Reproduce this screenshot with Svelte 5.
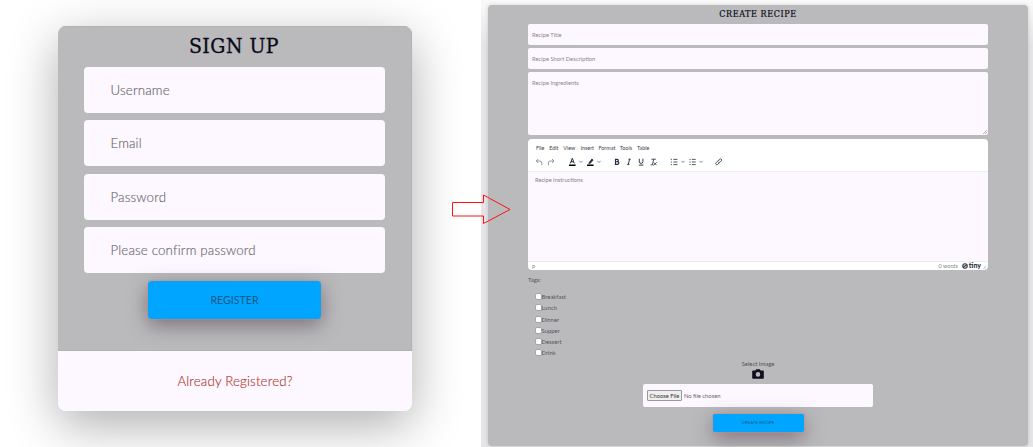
<script>
  const accountFields = ['Username', 'Email', 'Password', 'Please confirm password'];
  const menus = [['File', 13.3], ['Edit', 14], ['View', 17.2], ['Insert', 18], ['Format', 21.3], ['Tools', 17.2], ['Table', 15]];
  const tags = ['Breakfast', 'Lunch', 'Dinner', 'Supper', 'Dessert', 'Drink'];
</script>

<main>
  <section class="left">
    <div class="signup">
      <div class="signup-body">
        <h1>SIGN UP</h1>
        {#each accountFields as field}
          <div class="field">{field}</div>
        {/each}
        <div class="button register">REGISTER</div>
      </div>
      <div class="signup-foot">Already Registered?</div>
    </div>
  </section>

  <section class="right">
    <div class="recipe">
      <h2>CREATE RECIPE</h2>
      <div class="input">Recipe Title</div>
      <div class="input">Recipe Short Description</div>
      <div class="input area">Recipe Ingredients
        <svg class="grip" viewBox="0 0 4 4"><path d="M0 4 4 0M2 4 4 2" /></svg>
      </div>
      <div class="editor">
        <div class="menubar">
          {#each menus as [label, width]}
            <span style="width:{width}px">{label}</span>
          {/each}
        </div>
        <svg class="toolbar" viewBox="0 0 460 17" fill="none" stroke="#222f3e" stroke-width=".8">
          <g stroke="#7a828b">
            <path d="M10.2 5 8.2 7l2 2M8.4 7h3.3q2.1 0 2.1 2v2.3" />
            <path d="m24 5 2 2-2 2M25.8 7h-3.3q-2.1 0-2.1 2v2.3" />
          </g>
          <g transform="translate(0 .8)">
            <path d="m42.3 8.6 2-5.1 2 5.1M43 7h2.6" stroke-width="1" />
            <path d="M41 10.5h6.6" stroke="#000" stroke-width="1.4" />
            <path d="M59 10.5h6.6" stroke="#000" stroke-width="1.4" />
            <path d="m61.2 7.8 2.7-3.6 1.2 1-2.7 3.2-1.6.4z" fill="#222f3e" />
          </g>
          <g stroke="#5f6973" stroke-width=".8" transform="translate(0 .8)">
            <path d="m51.3 6.1 1.6 1.6 1.6-1.6M69.4 6.1 71 7.7l1.6-1.6M153.4 6.1l1.6 1.6 1.6-1.6M171.5 6.1l1.6 1.6 1.6-1.6" />
          </g>
          <g transform="translate(0 .8)">
            <path d="M87.5 4.5v5h1.8q1.5 0 1.5-1.35T89.3 6.9H87.5h1.5q1.3 0 1.3-1.2T89 4.5z" stroke-width="1.15" />
            <path d="M100.5 4.4h2.2M99.2 9.6h2.2M101.6 4.4l-1.3 5.2" stroke-width=".95" />
            <path d="M111.3 4v2.8q0 1.8 1.8 1.8t1.8-1.8V4M110.9 10.3h4.5" stroke-width=".95" />
            <path d="M123.3 4.4h4.6M125.8 4.4l-1.5 5.3M122.7 10h2.8M125.6 7.5l3 3M128.6 7.5l-3 3" />
            <path d="M145.4 4.6h4M145.4 7.2h4M145.4 9.8h4M163.9 4.6h3.8M163.9 7.2h3.8M163.9 9.8h3.8" />
            <path d="M143.3 4v1.3M142.8 7.2h1.2M142.8 9.8h1.2" />
            <path d="M161.4 4.6h1.2M161.4 7.2h1.2M161.4 9.8h1.2" />
            <path d="m190.2 5.9 1.4-1.5q1.1-.8 1.8.1.7.8 0 1.5l-1.8 1.8q-.8.6-1.5.1M191.2 8.1l-1.4 1.5q-1.1.8-1.8-.1-.7-.8 0-1.5l1.8-1.8q.8-.6 1.5-.1" />
          </g>
        </svg>
        <div class="content">Recipe Instructions</div>
        <div class="status">
          <span class="path">p</span>
          <span class="words">0 words</span>
          <svg class="mark" viewBox="0 0 6 6"><circle cx="3" cy="3" r="2.2" /><path d="m1.5 4 3-2" /></svg>
          <b>tiny</b>
          <svg class="grip" viewBox="0 0 4 4"><path d="M0 4 4 0M2 4 4 2" /></svg>
        </div>
      </div>
      <div class="tags-label">Tags:</div>
      <div class="tags">
        {#each tags as tag}
          <div class="tag"><i></i><span>{tag}</span></div>
        {/each}
      </div>
      <div class="select">Select Image</div>
      <svg class="camera" viewBox="0 0 12 10">
        <path fill="#10101d" fill-rule="evenodd" d="M1 1.5h2.4L4.2.3h3.6l.8 1.2H11q.8 0 .8.8v6.6q0 .8-.8.8H1q-.8 0-.8-.8V2.3q0-.8.8-.8M6 3.1a2.3 2.3 0 1 0 0 4.6 2.3 2.3 0 0 0 0-4.6" />
      </svg>
      <div class="file"><span class="choose">Choose File</span><span>No file chosen</span></div>
      <div class="button create">CREATE RECIPE</div>
    </div>
  </section>

  <svg class="arrow" viewBox="0 0 60 32"><path d="M1.5 8.5h31V1L59 15.5 32.5 29.5V22h-31z" /></svg>
</main>

<style>
  :global(body) { background: #fff; }
  main { position: relative; display: flex; width: 1033px; height: 447px; overflow: hidden; font-family: Lato, sans-serif; box-sizing: border-box; }
  main :global(*) { box-sizing: border-box; }
  h1, h2 { margin: 0; font-family: "DejaVu Serif Condensed", "DejaVu Serif", serif; font-stretch: condensed; font-weight: 400; color: #090917; text-align: center; white-space: nowrap; }
  .left { width: 481px; height: 447px; padding: 26px 0 0 58px; overflow: hidden; flex: none; }
  .signup { width: 354px; height: 385px; border-radius: 8px; box-shadow: 0 14px 50px rgba(0, 0, 8, .32); overflow: hidden; }
  .signup-body { height: 325px; padding: 0 27px 0 26px; background: #bababc; border: solid #b2b2b5; border-width: 1px 1px 1px 0; display: flex; flex-direction: column; align-items: center; }
  h1 { height: 40px; line-height: 38px; font-size: 21px; letter-spacing: .5px; -webkit-text-stroke: .3px #090917; }
  .field { width: 301px; height: 46px; margin-bottom: 7.4px; padding-left: 27px; border-radius: 4px; background: #fdf8ff; color: #69676c; font-size: 13.3px; font-weight: 300; line-height: 47px; letter-spacing: .16px; -webkit-text-stroke: .15px #69676c; flex: none; }
  .button { background: #00a5ff; color: #145a83; text-align: center; box-shadow: 0 0 1px 1px rgba(211, 139, 112, .45), 0 6px 20px rgba(57, 37, 57, .5); flex: none; }
  .register { width: 173px; height: 38px; margin-left: 1px; border-radius: 4px; font-size: 10.6px; line-height: 38px; }
  .signup-foot { height: 60px; background: #fdf8ff; color: #b53329; text-align: center; font-size: 13.3px; font-weight: 300; letter-spacing: .15px; line-height: 60px; -webkit-text-stroke: .15px #b53329; }
  .right { width: 552px; height: 447px; padding: 5px 0 0 7px; background: linear-gradient(#fafafa, #e5e5e7 45px); overflow: hidden; }
  .recipe { width: 540px; height: 441px; padding: 0 40px; border-radius: 4px; background: #bababc; box-shadow: 0 0 4px rgba(0, 0, 0, .15); display: flex; flex-direction: column; align-items: center; }
  h2 { height: 19px; font-size: 9px; line-height: 19px; letter-spacing: .55px; -webkit-text-stroke: .2px #090917; }
  .input { position: relative; width: 460px; height: 20.5px; margin-bottom: 3.5px; padding-left: 4px; border-radius: 2px; background: #fdf8ff; color: #8a878d; font-size: 5.8px; line-height: 21px; flex: none; }
  .area { height: 62.5px; margin-bottom: 4.5px; }
  .grip { width: 4px; height: 4px; fill: none; stroke: #888; stroke-width: .6; }
  .area .grip { position: absolute; right: 1px; bottom: 1px; }
  .editor { width: 460px; height: 131px; border-radius: 4px; background: #fff; overflow: hidden; flex: none; }
  .menubar { display: flex; height: 15px; padding: 2px 0 0 8px; align-items: center; font-size: 5.4px; color: #3c4550; }
  .menubar span { flex: none; }
  .toolbar { display: block; width: 460px; height: 17px; }
  .content { height: 91px; padding: 4px 7px; background: #fdf8ff; font-size: 5.7px; line-height: 7px; color: #82808b; border: solid #eee; border-width: 1px 0; }
  .status { height: 8px; display: flex; align-items: center; padding: 0 2px 0 4px; font-size: 5.5px; color: #85858b; }
  .words { margin-left: auto; margin-right: 4px; }
  .mark { width: 6px; height: 6px; fill: none; stroke: #222f3e; stroke-width: 1.1; }
  .status b { margin: 0 2px 1px 1px; font: 900 7px/7px Lato, sans-serif; color: #222f3e; }
  .status .grip { width: 3px; height: 3px; margin-top: 3px; }
  .tags-label { width: 460px; height: 21px; padding-top: 6px; font-size: 5.9px; line-height: 7px; color: #55555b; }
  .tags { width: 445px; height: 68px; }
  .tag { display: flex; height: 11.25px; align-items: center; font-size: 5.9px; color: #55555c; }
  .tag i { width: 5px; height: 5px; margin-right: 1px; border-radius: 1px; background: #fff; box-shadow: 0 0 0 .5px #8f8f93; }
  .select { height: 10px; font-size: 5.9px; line-height: 10px; color: #505056; }
  .camera { width: 12px; height: 10px; flex: none; }
  .file { width: 230px; height: 23px; margin: 5px 0 7px; padding-left: 4px; border-radius: 2px; background: #fdf8ff; display: flex; align-items: center; gap: 2px; font-size: 5.8px; color: #66646a; flex: none; }
  .choose { width: 35px; height: 11px; border: 1px solid #999; border-radius: 1px; background: #efefef; color: #333; line-height: 9px; text-align: center; white-space: nowrap; }
  .create { width: 91px; height: 18px; border-radius: 2px; font-size: 4.5px; line-height: 18px; }
  .arrow { position: absolute; left: 451px; top: 194px; width: 60px; height: 32px; fill: none; stroke: #f11; stroke-width: 1; }
</style>
